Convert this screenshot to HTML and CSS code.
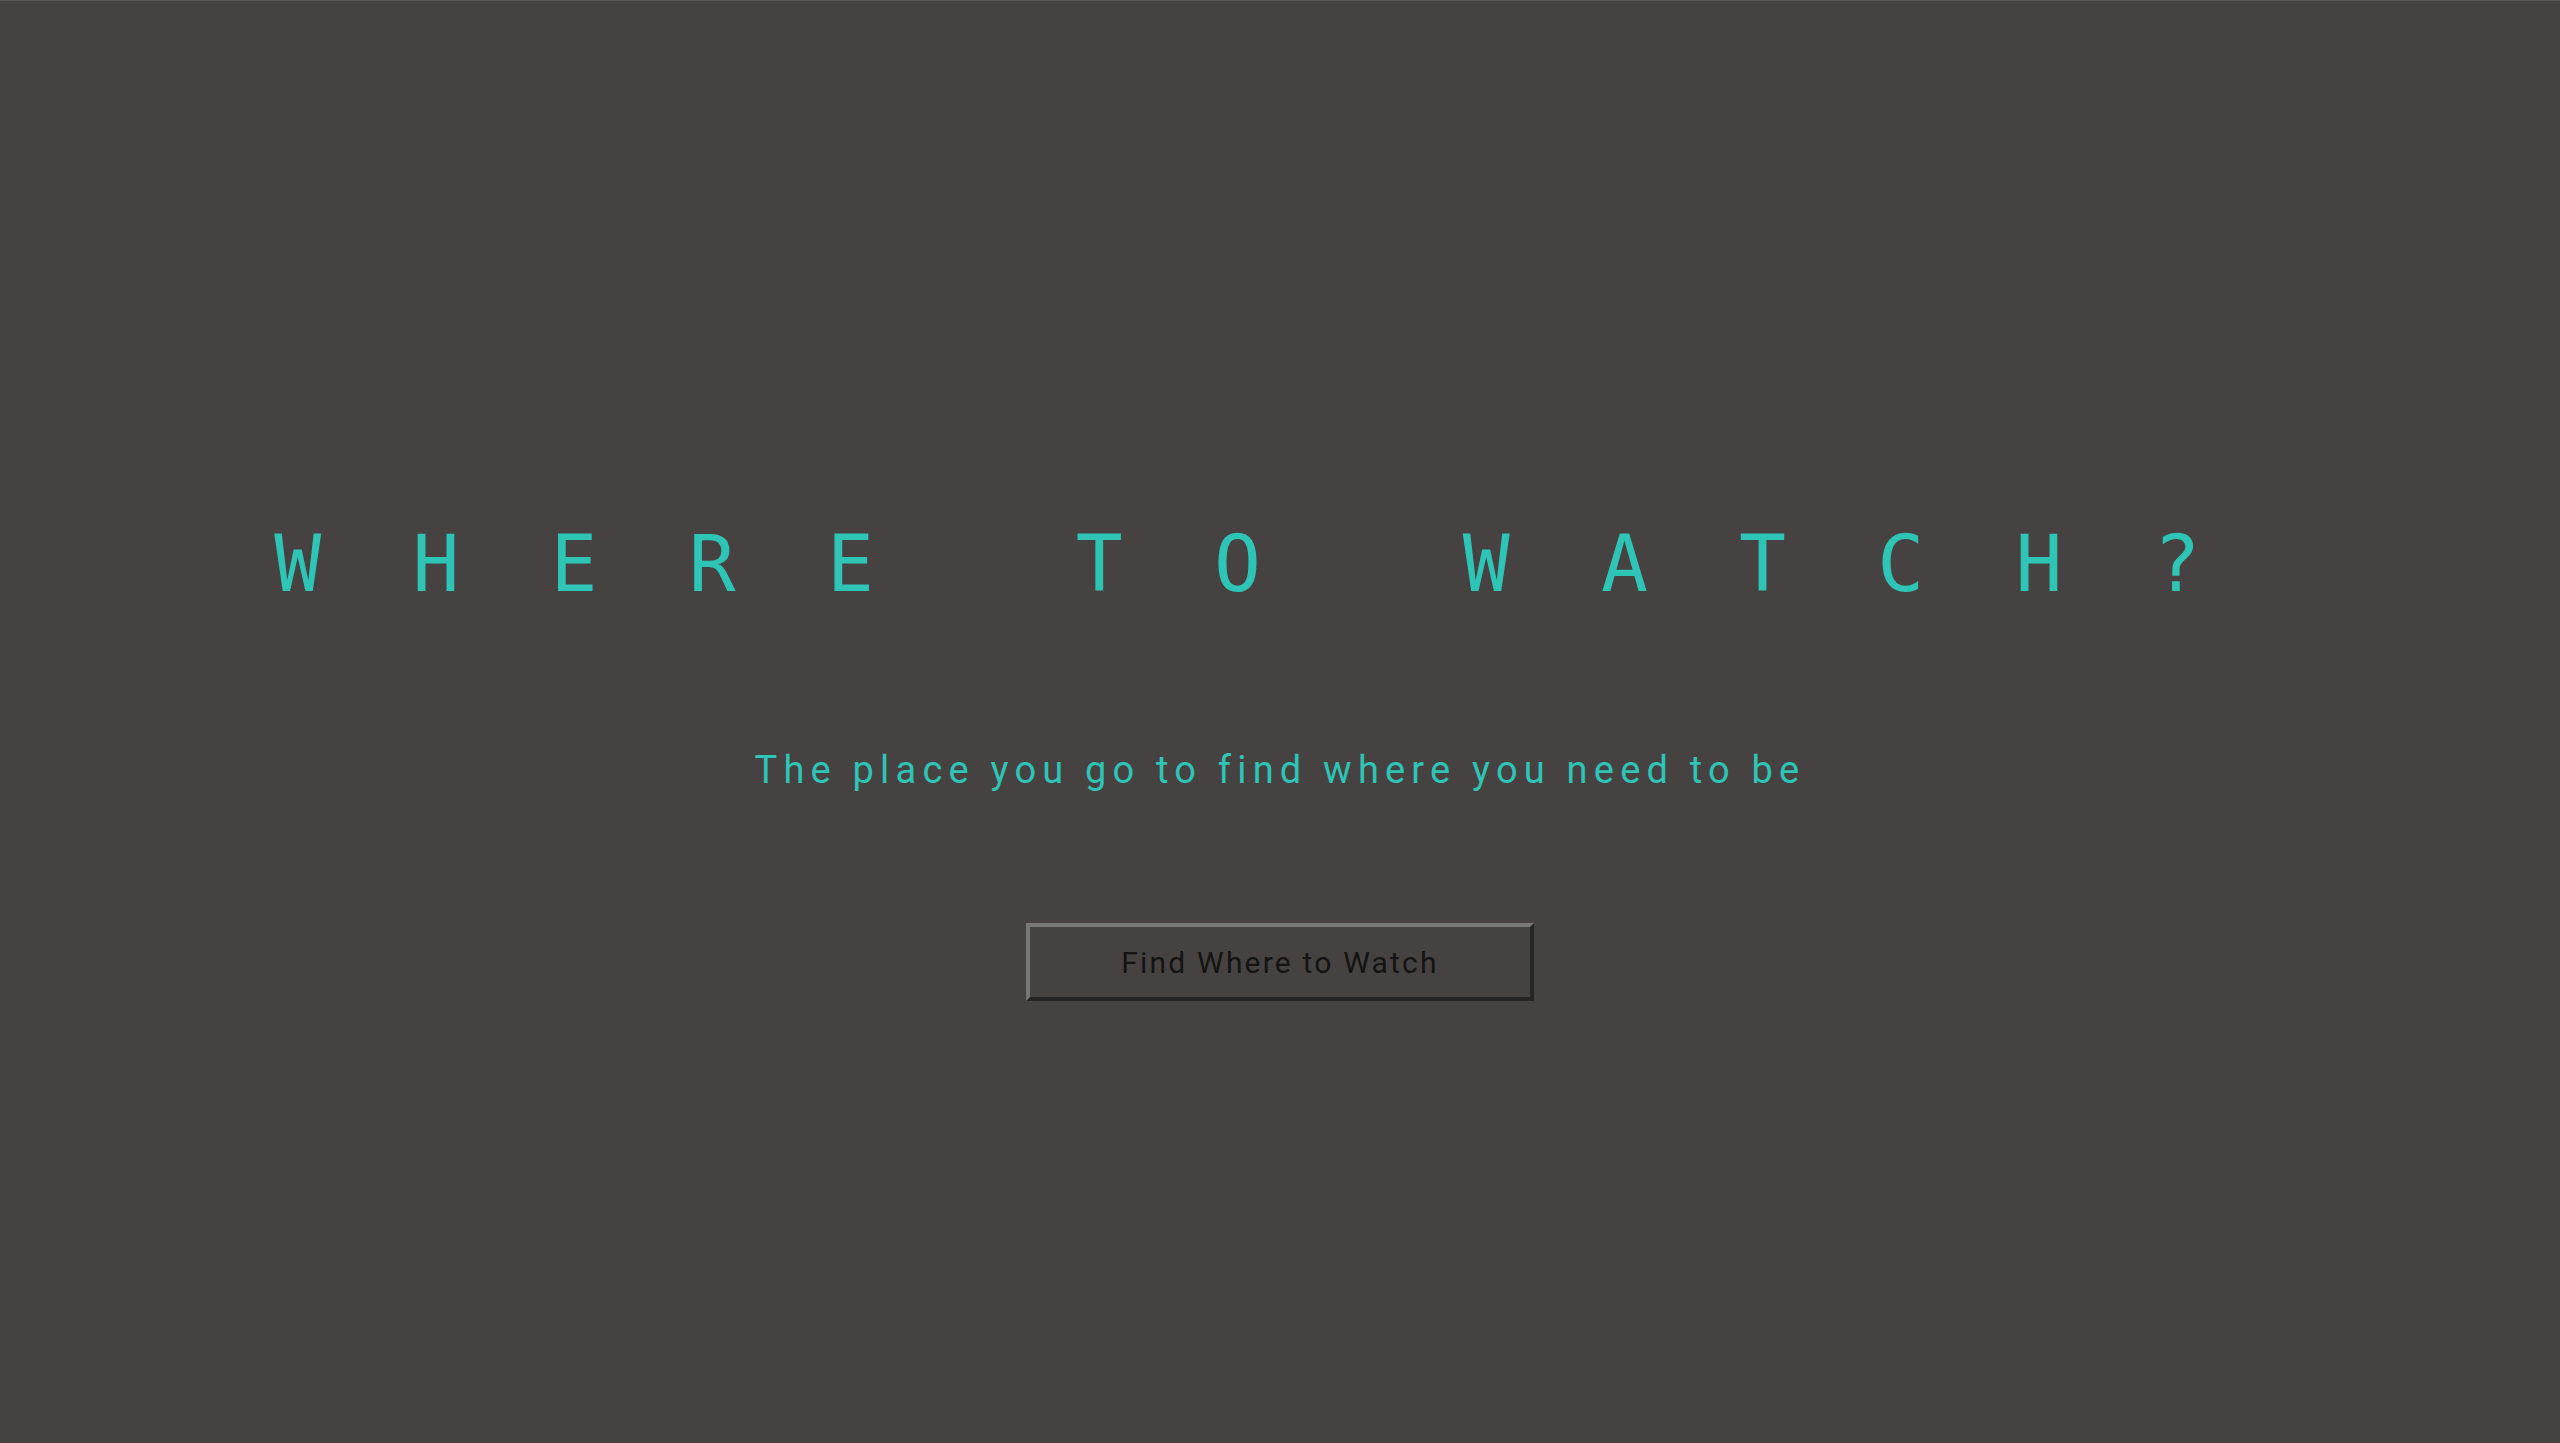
FILE: index.html
```html
<!DOCTYPE html>
<html lang="en">
<head>
<meta charset="utf-8">
<title>Where to Watch?</title>
<link rel="stylesheet" href="styles.css">
</head>
<body>
<main class="page">
  <h1 class="title">WHERE TO WATCH?</h1>
  <p class="tagline">The place you go to find where you need to be</p>
  <button class="cta" type="button">Find Where to Watch</button>
</main>
</body>
</html>
```

FILE: styles.css
```css
html, body {
  margin: 0;
  padding: 0;
  background: #464241;
}

.page {
  box-sizing: border-box;
  min-height: 100vh;
  border-top: 1px solid #5a5858;
  background: #464241;
  display: flex;
  flex-direction: column;
  align-items: center;
  padding-top: 524px;
}

.title {
  margin: 0;
  padding-left: 6px;
  font-family: "DejaVu Sans Mono", monospace;
  font-weight: normal;
  font-size: 78px;
  line-height: 1;
  letter-spacing: 91.2px;
  word-spacing: -27.5px;
  color: #2ec4b6;
  white-space: nowrap;
}

.tagline {
  margin: 148px 0 0;
  font-family: Roboto, "Noto Sans", sans-serif;
  font-size: 38px;
  line-height: 1;
  letter-spacing: 6.2px;
  color: #2ec4b6;
  white-space: nowrap;
}

.cta {
  margin-top: 134px;
  box-sizing: border-box;
  width: 508px;
  height: 78px;
  padding: 0;
  background: #464241;
  border-width: 4px;
  border-style: solid;
  border-color: #787878 #252525 #252525 #787878;
  font-family: Roboto, "Noto Sans", sans-serif;
  font-size: 30px;
  letter-spacing: 2.2px;
  color: #141414;
  cursor: pointer;
}
```
